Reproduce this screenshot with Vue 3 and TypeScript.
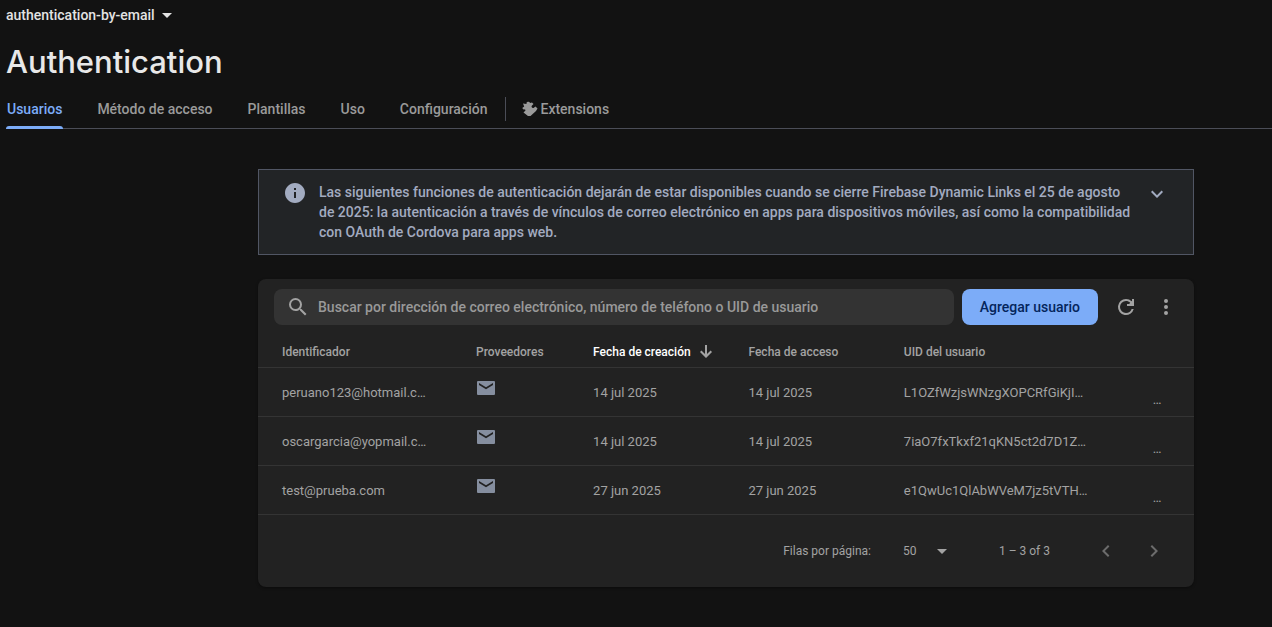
<script setup lang="ts">
import { ref } from 'vue'

interface User {
  id: string
  created: string
  accessed: string
  uid: string
}

const tabs: string[] = ['Usuarios', 'Método de acceso', 'Plantillas', 'Uso', 'Configuración']
const activeTab = ref<string>('Usuarios')
const query = ref<string>('')
const pageSize = ref<number>(50)

const users: User[] = [
  { id: 'peruano123@hotmail.c…', created: '14 jul 2025', accessed: '14 jul 2025', uid: 'L1OZfWzjsWNzgXOPCRfGiKjI…' },
  { id: 'oscargarcia@yopmail.c…', created: '14 jul 2025', accessed: '14 jul 2025', uid: '7iaO7fxTkxf21qKN5ct2d7D1Z…' },
  { id: 'test@prueba.com', created: '27 jun 2025', accessed: '27 jun 2025', uid: 'e1QwUc1QlAbWVeM7jz5tVTH…' },
]
</script>

<template>
  <div class="page">
    <header class="header">
      <button class="project" type="button">
        authentication-by-email
        <svg class="caret" viewBox="0 0 10 5" aria-hidden="true"><path d="M0 0h10L5 5z" /></svg>
      </button>
      <h1 class="title">Authentication</h1>
      <nav class="tabs">
        <a
          v-for="tab in tabs"
          :key="tab"
          href="#"
          class="tab"
          :class="{ active: tab === activeTab }"
          @click.prevent="activeTab = tab"
        >{{ tab }}</a>
        <span class="divider"></span>
        <a href="#" class="tab ext" @click.prevent>
          <svg class="puzzle" viewBox="0 0 16 16" aria-hidden="true">
            <path d="M1 2.500 4.500 3A1.800 1.800 0 0 1 8 2L10 1.500 11.500 3 10 4.500A1.500 1.500 0 0 0 11.500 7L13.500 5.500 15.500 7.500 14 10 8.500 15H6L1.500 11.500 3.500 9.500 3 8.300A1.600 1.600 0 0 1 .5 6.800L2.200 5.500z" />
          </svg>
          Extensions
        </a>
      </nav>
    </header>

    <main class="content">
      <section class="notice">
        <svg class="icon" viewBox="0 0 24 24" aria-hidden="true">
          <path d="M12 2C6.480 2 2 6.480 2 12s4.480 10 10 10 10-4.480 10-10S17.520 2 12 2zm1 15h-2v-6h2v6zm0-8h-2V7h2v2z" />
        </svg>
        <p class="notice-text">
          Las siguientes funciones de autenticación dejarán de estar disponibles cuando se cierre Firebase Dynamic Links el 25 de agosto de 2025: la autenticación a través de vínculos de correo electrónico en apps para dispositivos móviles, así como la compatibilidad con OAuth de Cordova para apps web.
        </p>
        <button class="icon-button expand" type="button" aria-label="Expandir">
          <svg class="icon" viewBox="0 0 24 24" aria-hidden="true"><path d="M16.590 8.590 12 13.170 7.410 8.590 6 10l6 6 6-6z" /></svg>
        </button>
      </section>

      <section class="card">
        <div class="toolbar">
          <label class="search">
            <svg class="icon" viewBox="0 0 24 24" aria-hidden="true">
              <path d="M15.500 14h-.790l-.280-.270A6.471 6.471 0 0 0 16 9.500 6.500 6.500 0 1 0 9.500 16c1.610 0 3.090-.590 4.230-1.570l.270.280v.790l5 4.990L20.490 19l-4.990-5zm-6 0C7.010 14 5 11.990 5 9.500S7.010 5 9.500 5 14 7.010 14 9.500 11.990 14 9.500 14z" />
            </svg>
            <input
              v-model="query"
              type="text"
              aria-label="Buscar usuarios"
              placeholder="Buscar por dirección de correo electrónico, número de teléfono o UID de usuario"
            />
          </label>
          <button class="primary" type="button">Agregar usuario</button>
          <button class="icon-button round" type="button" aria-label="Actualizar">
            <svg class="icon" viewBox="0 0 24 24" aria-hidden="true">
              <path d="M17.650 6.350A7.958 7.958 0 0 0 12 4a8 8 0 1 0 7.730 10h-2.080A5.990 5.990 0 0 1 12 18a6 6 0 1 1 0-12c1.660 0 3.140.690 4.220 1.780L15.200 9H13v2h7V4h-2v2z" />
            </svg>
          </button>
          <button class="icon-button round" type="button" aria-label="Más opciones">
            <svg class="icon" viewBox="0 0 24 24" aria-hidden="true">
              <path d="M12 8a2 2 0 1 0 0-4 2 2 0 0 0 0 4zm0 2a2 2 0 1 0 0 4 2 2 0 0 0 0-4zm0 6a2 2 0 1 0 0 4 2 2 0 0 0 0-4z" />
            </svg>
          </button>
        </div>

        <table class="users">
          <thead>
            <tr>
              <th class="col-id" scope="col">Identificador</th>
              <th class="col-provider" scope="col">Proveedores</th>
              <th class="col-date sorted" scope="col" aria-sort="descending">
                <button class="sort" type="button">
                  Fecha de creación
                  <svg class="arrow" viewBox="0 0 12 13" aria-hidden="true"><path d="M5 0h2v9l3.600-3.500L12 7l-6 6-6-6 1.400-1.500L5 9z" /></svg>
                </button>
              </th>
              <th class="col-date" scope="col">Fecha de acceso</th>
              <th class="col-uid" scope="col">UID del usuario</th>
              <th class="col-menu"></th>
            </tr>
          </thead>
          <tbody>
            <tr v-for="user in users" :key="user.id">
              <td class="col-id">{{ user.id }}</td>
              <td class="col-provider">
                <svg class="mail" viewBox="0 0 18 14" role="img" aria-label="Correo electrónico">
                  <path fill-rule="evenodd" d="M1 0h16a1 1 0 0 1 1 1v12a1 1 0 0 1-1 1H1a1 1 0 0 1-1-1V1a1 1 0 0 1 1-1zM2 2v1.900L9 8.200l7-4.300V2L9 6.200z" />
                </svg>
              </td>
              <td>{{ user.created }}</td>
              <td>{{ user.accessed }}</td>
              <td>{{ user.uid }}</td>
              <td class="col-menu"><button class="more" type="button" aria-label="Opciones del usuario">…</button></td>
            </tr>
          </tbody>
        </table>

        <footer class="pager">
          <label for="page-size">Filas por página:</label>
          <span class="select-wrap">
            <select id="page-size" v-model="pageSize">
              <option :value="50">50</option>
              <option :value="100">100</option>
              <option :value="250">250</option>
            </select>
            <svg class="caret" viewBox="0 0 10 5" aria-hidden="true"><path d="M0 0h10L5 5z" /></svg>
          </span>
          <span class="range">1 – 3 of 3</span>
          <button class="icon-button step" type="button" aria-label="Página anterior" disabled>
            <svg class="icon" viewBox="0 0 24 24" aria-hidden="true"><path d="M15.410 7.410 14 6l-6 6 6 6 1.410-1.410L10.830 12z" /></svg>
          </button>
          <button class="icon-button step" type="button" aria-label="Página siguiente" disabled>
            <svg class="icon" viewBox="0 0 24 24" aria-hidden="true"><path d="M10 6 8.590 7.410 13.170 12l-4.580 4.590L10 18l6-6z" /></svg>
          </button>
        </footer>
      </section>
    </main>
  </div>
</template>

<style>
body {
  margin: 0;
  background: #121212;
}
</style>

<style scoped>
.page {
  min-height: 100vh;
  background: #121212;
  color: #a3a3a3;
  font-family: Roboto, "Liberation Sans", sans-serif;
  font-size: 14px;
}

.page * {
  box-sizing: border-box;
}

button,
input,
select {
  margin: 0;
  padding: 0;
  border: 0;
  background: none;
  color: inherit;
  font: inherit;
}

svg {
  display: block;
  flex: none;
  fill: currentColor;
}

.icon {
  width: 24px;
  height: 24px;
}

.caret {
  width: 10px;
  height: 5px;
}

.header {
  padding-left: 6px;
}

.project {
  display: flex;
  align-items: center;
  gap: 7px;
  height: 30px;
  color: #e3e3e3;
  font-weight: 500;
}

.title {
  margin: 0;
  padding: 12px 0;
  color: #e8e8e8;
  font-family: Inter, Roboto, sans-serif;
  font-size: 31px;
  font-weight: 500;
  line-height: 40px;
}

.tabs {
  display: flex;
  align-items: center;
  gap: 33px;
  height: 35px;
  border-bottom: 1px solid #4b4d57;
  padding-bottom: 4px;
}

.tab {
  position: relative;
  padding: 0 1px;
  color: #9a9a9a;
  font-weight: 500;
  line-height: 30px;
  text-decoration: none;
}

.tab.active {
  color: #7cacf8;
}

.tab.active::after {
  content: "";
  position: absolute;
  left: 0;
  right: 0;
  bottom: -5px;
  height: 3px;
  border-radius: 3px 3px 0 0;
  background: #7cacf8;
}

.divider {
  width: 1px;
  height: 24px;
  margin: 0 -17px;
  background: #4b4d57;
}

.ext {
  display: flex;
  align-items: center;
  gap: 3px;
  padding: 0;
}

.puzzle {
  width: 16px;
  height: 16px;
}

.content {
  display: flex;
  flex-direction: column;
  gap: 24px;
  padding: 40px 78px 40px 258px;
}

.notice {
  display: flex;
  align-items: flex-start;
  gap: 12px;
  padding: 11px 24px;
  border: 1px solid #515664;
  background: #222426;
  color: #a2abc0;
}

.notice-text {
  flex: 1;
  margin: 0;
  padding: 1px 0;
  font-weight: 500;
  line-height: 20px;
}

.icon-button {
  display: flex;
  align-items: center;
  justify-content: center;
}

.expand {
  padding-top: 1px;
}

.card {
  border-radius: 8px;
  background: #222;
  box-shadow: 0 1px 3px rgba(0, 0, 0, 0.4);
}

.toolbar {
  display: flex;
  align-items: center;
  padding: 10px 8px 10px 16px;
}

.search {
  display: flex;
  flex: 1;
  align-items: center;
  gap: 8px;
  height: 36px;
  margin-right: 8px;
  padding: 0 12px;
  border-radius: 8px;
  background: #333;
}

.search input {
  flex: 1;
  min-width: 0;
  outline: none;
  font-weight: 500;
}

.search input::placeholder {
  color: #999;
  opacity: 1;
}

.primary {
  height: 36px;
  margin-right: 8px;
  padding: 0 18px;
  border-radius: 8px;
  background: #7cacf8;
  color: #04255c;
  font-weight: 500;
}

.round {
  width: 40px;
  height: 36px;
}

.users {
  width: 100%;
  border-collapse: collapse;
  table-layout: fixed;
  font-size: 13px;
}

.users th,
.users td {
  padding: 2px 0 0;
  border-bottom: 1px solid #343434;
  text-align: left;
  white-space: nowrap;
}

.users th {
  height: 32px;
  font-size: 12px;
  font-weight: 500;
}

.users td {
  height: 49px;
}

.users .col-id {
  width: 23.3%;
  padding-left: 24px;
}

.col-provider {
  width: 12.5%;
}

.col-date {
  width: 16.6%;
}

.col-uid {
  width: 26.6%;
}

.users .sorted {
  color: #fff;
}

.sort {
  display: flex;
  align-items: center;
  gap: 9px;
}

.arrow {
  width: 12px;
  height: 13px;
  fill: #a3a3a3;
}

.mail {
  width: 18px;
  height: 14px;
  margin: 0 0 10px 1px;
  fill: #858e9f;
}

.more {
  display: block;
  margin-top: 14px;
}

.pager {
  display: flex;
  align-items: center;
  justify-content: flex-end;
  height: 72px;
  padding: 1px 16px 0 0;
  font-size: 12px;
}

.select-wrap {
  display: flex;
  align-items: center;
  width: 44px;
  margin: 0 52px 0 32px;
}

.select-wrap select {
  flex: 1;
  appearance: none;
  outline: none;
}

.range {
  margin-right: 32px;
}

.step {
  width: 48px;
  height: 48px;
  color: #6c6c6c;
}
</style>
